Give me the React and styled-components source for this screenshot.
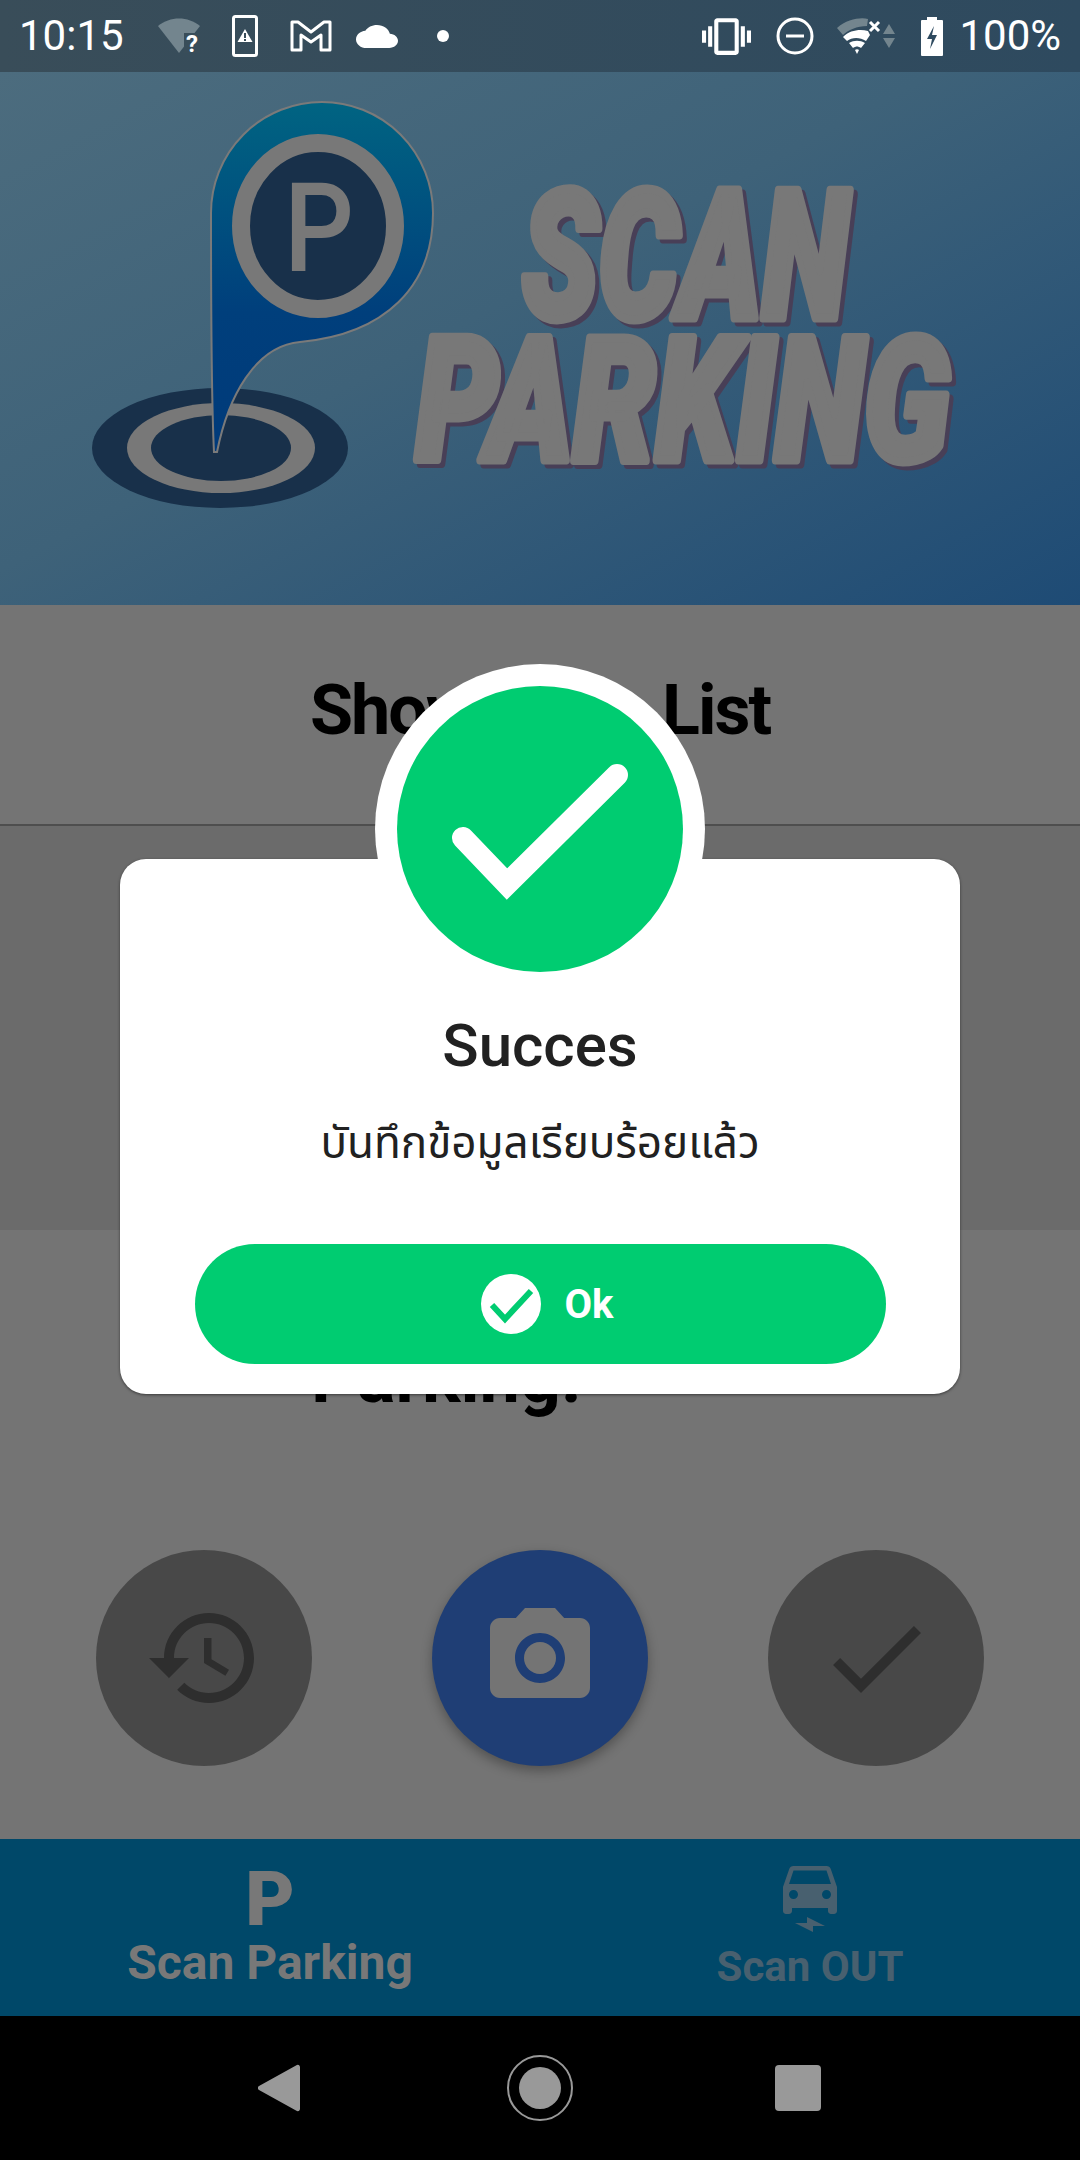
import React from 'react'
import styled, { createGlobalStyle } from 'styled-components'

const GlobalStyle = createGlobalStyle`
    html, body {
        margin: 0;
        padding: 0;
        background: #000;
        font-family: Roboto, "Noto Sans", sans-serif;
    }
`

const Page = styled.div`
    position: relative;
    width: 1080px;
    height: 2160px;
    overflow: hidden;
    display: flex;
    flex-direction: column;
`

// Status bar
const StatusBar = styled.div`
    height: 72px;
    flex: none;
    display: flex;
    align-items: center;
    justify-content: space-between;
    padding: 0 19px;
    background: linear-gradient(90deg, #394d59, #2e4a5f);
    color: #fff;
`

const StatusGroup = styled.div`
    display: flex;
    align-items: center;
`

const StatusText = styled.span`
    font-size: 42px;
    line-height: 72px;
    color: #fff;
    margin-left: ${(p) => p.$gap || 0}px;
`

const StatusIcon = styled.svg`
    display: block;
    flex: none;
    overflow: visible;
    margin-left: ${(p) => p.$gap || 0}px;
`

const Dot = styled.span`
    width: 12px;
    height: 12px;
    border-radius: 50%;
    background: #fff;
    margin-left: 39px;
`

// Logo header
const Header = styled.header`
    height: 533px;
    flex: none;
    background: linear-gradient(152deg, #4c6c7e 0%, #3e6279 45%, #1e4b75 100%);
`

const LogoSvg = styled.svg`
    display: block;
    width: 1080px;
    height: 533px;
    filter: blur(0.7px);
`

const LogoWord = styled.text`
    font-family: Roboto, "Liberation Sans", sans-serif;
    font-weight: 900;
    font-style: italic;
    fill: #787878;
    stroke: #787878;
    stroke-width: 9px;
    stroke-linejoin: round;
    filter: drop-shadow(4px 4px 0 #483f57);
`

const LogoLetter = styled.text`
    font-family: Roboto, sans-serif;
    font-weight: 500;
    font-size: 125px;
    fill: #787878;
`

// Page sections
const TitleSection = styled.section`
    height: 221px;
    flex: none;
    box-sizing: border-box;
    padding-top: 63px;
    background: #747474;
    border-bottom: 2px solid #4e4e4e;
`

const PageTitle = styled.h1`
    margin: 0;
    font-size: 70px;
    line-height: 84px;
    font-weight: 700;
    letter-spacing: -2px;
    word-spacing: 10px;
    color: #000;
    text-align: center;
`

const ListArea = styled.section`
    height: 404px;
    flex: none;
    background: #6b6b6b;
`

const ScanSection = styled.section`
    flex: 1;
    box-sizing: border-box;
    padding: 106px 0 0;
    background: #747474;
`

const ScanLabel = styled.h2`
    margin: 0;
    padding-left: 311px;
    font-size: 72px;
    line-height: 84px;
    font-weight: 700;
    color: #000;
`

const ActionRow = styled.div`
    display: flex;
    justify-content: space-between;
    padding: 0 96px;
    margin-top: 130px;
`

const ActionButton = styled.div`
    width: 216px;
    height: 216px;
    border-radius: 50%;
    display: flex;
    align-items: center;
    justify-content: center;
    background: ${(p) => (p.$primary ? '#1f3e75' : '#484848')};
    box-shadow: ${(p) => (p.$primary ? '0 5px 12px rgba(0, 0, 0, .3)' : 'none')};
    color: ${(p) => (p.$primary ? '#747474' : '#2e2e2e')};
`

// Bottom tabs
const BottomTabs = styled.nav`
    height: 177px;
    flex: none;
    display: grid;
    grid-template-columns: 1fr 1fr;
    background: #004869;
`

const Tab = styled.div`
    display: flex;
    flex-direction: column;
    align-items: center;
    color: ${(p) => (p.$active ? '#787878' : '#48606f')};
`

const TabLetter = styled.span`
    font-size: 76px;
    font-weight: 900;
    line-height: 60px;
    margin-top: 30px;
    height: 60px;
`

const TabLabel = styled.span`
    font-weight: 700;
    font-size: ${(p) => (p.$active ? 48 : 42)}px;
    line-height: 54px;
    margin-top: ${(p) => p.$top}px;
`

const CarIcon = styled.svg`
    display: block;
    margin-top: 24px;
`

// System navigation
const SystemNav = styled.div`
    height: 144px;
    flex: none;
    box-sizing: border-box;
    padding: 0 259px 0 258px;
    display: flex;
    align-items: center;
    justify-content: space-between;
    background: #000;
`

const SysIcon = styled.svg`
    display: block;
`

const HomeRing = styled.div`
    width: 66px;
    height: 66px;
    margin-left: 5px;
    box-sizing: border-box;
    border: 2.5px solid #999;
    border-radius: 50%;
    display: flex;
    align-items: center;
    justify-content: center;
    &::after {
        content: '';
        width: 42px;
        height: 42px;
        border-radius: 50%;
        background: #999;
    }
`

const RecentSquare = styled.div`
    width: 46px;
    height: 46px;
    border-radius: 4px;
    background: #999;
`

// Success dialog
const Dialog = styled.div`
    position: absolute;
    top: 859px;
    left: 120px;
    width: 840px;
    height: 535px;
    box-sizing: border-box;
    padding: 153px 74px 0;
    display: flex;
    flex-direction: column;
    align-items: center;
    background: #fff;
    border-radius: 26px;
    box-shadow: 0 1px 3px rgba(0, 0, 0, .5);
`

const BadgeRing = styled.div`
    position: absolute;
    top: -195px;
    left: 255px;
    width: 330px;
    height: 330px;
    border-radius: 50%;
    background: #fff;
    display: flex;
    align-items: center;
    justify-content: center;
`

const Badge = styled.svg`
    display: block;
`

const DialogTitle = styled.h2`
    margin: 0;
    font-size: 60px;
    line-height: 68px;
    font-weight: 500;
    color: #212121;
`

const DialogText = styled.p`
    margin: 33px 0 0;
    font-size: 44px;
    line-height: 60px;
    font-family: Roboto, "Noto Sans Thai", "Noto Sans", "DejaVu Sans", sans-serif;
    color: #212121;
    white-space: nowrap;
`

const OkButton = styled.div`
    width: 691px;
    height: 120px;
    margin-top: 71px;
    flex: none;
    box-sizing: border-box;
    padding-left: 14px;
    border-radius: 60px;
    background: #00cc71;
    display: flex;
    align-items: center;
    justify-content: center;
    gap: 24px;
`

const OkLabel = styled.span`
    font-size: 40px;
    font-weight: 700;
    color: #fff;
`

const Logo = () => (
    <LogoSvg viewBox="0 0 1080 533">
        <defs>
            <linearGradient id="pin" x1="0" y1="0" x2="0" y2="1">
                <stop offset="0" stopColor="#006482" />
                <stop offset="0.6" stopColor="#003f7c" />
                <stop offset="1" stopColor="#003a7a" />
            </linearGradient>
        </defs>
        <ellipse cx="220" cy="376" rx="128" ry="60" fill="#18304a" />
        <ellipse cx="221" cy="376" rx="94" ry="45" fill="#787878" />
        <ellipse cx="221" cy="376" rx="70" ry="33" fill="#18304a" />
        <path
            d="M214 380 C211 320 211 230 211 141 A111 111 0 0 1 433 141 C433 215 385 262 300 270 C255 274 228 325 217 380 Z"
            fill="url(#pin)"
            stroke="#7a7a7a"
            strokeWidth="2"
        />
        <ellipse cx="318" cy="154" rx="77" ry="83" fill="#18304a" stroke="#787878" strokeWidth="18" />
        <LogoLetter x="284" y="199" textLength="70" lengthAdjust="spacingAndGlyphs">P</LogoLetter>
        <LogoWord x="522" y="246" fontSize="180" textLength="326" lengthAdjust="spacingAndGlyphs">SCAN</LogoWord>
        <LogoWord x="416" y="388" fontSize="172" textLength="534" lengthAdjust="spacingAndGlyphs">PARKING</LogoWord>
    </LogoSvg>
)

const App = () => {
    return (
        <Page>
            <GlobalStyle />
            <StatusBar>
                <StatusGroup>
                    <StatusText>10:15</StatusText>
                    <StatusIcon $gap={34} width="42" height="34" viewBox="0 0 42 34">
                        <path d="M0 7C12-3 30-3 42 7L21 34Z" fill="#73858e" />
                        <path d="M26 14h16v20H26Z" fill="#394d59" />
                        <text x="34" y="33" fontSize="24" fontWeight="700" fontFamily="Roboto, sans-serif" fill="#fff" textAnchor="middle">?</text>
                    </StatusIcon>
                    <StatusIcon $gap={32} width="26" height="42" viewBox="0 0 26 42">
                        <rect x="1.5" y="1.5" width="23" height="39" rx="2" fill="none" stroke="#fff" strokeWidth="3" />
                        <path d="M13 14l7.500 13h-15Z" fill="#fff" />
                        <path d="M12 18h2v5h-2zM12 24h2v2h-2z" fill="#394d59" />
                    </StatusIcon>
                    <StatusIcon $gap={32} width="42" height="32" viewBox="0 0 42 32">
                        <path d="M2 2h6l13 10L34 2h6v28h-9V15l-10 7-10-7v15H2Z" fill="none" stroke="#fff" strokeWidth="3" strokeLinejoin="round" />
                    </StatusIcon>
                    <StatusIcon $gap={24} width="42" height="23" viewBox="0 4 24 16" preserveAspectRatio="none">
                        <path d="M19.35 10.040C18.670 6.590 15.640 4 12 4 9.110 4 6.600 5.640 5.350 8.040 2.340 8.360 0 10.910 0 14c0 3.310 2.690 6 6 6h13c2.760 0 5-2.240 5-5 0-2.640-2.050-4.780-4.650-4.960z" fill="#fff" />
                    </StatusIcon>
                    <Dot />
                </StatusGroup>
                <StatusGroup>
                    <StatusIcon width="49" height="37" viewBox="0 3 24 18">
                        <path d="M0 15h2V9H0v6zm3 2h2V7H3v10zm19-8v6h2V9h-2zm-3 8h2V7h-2v10zM16.500 3h-9C6.670 3 6 3.670 6 4.500v15c0 .83.67 1.500 1.500 1.500h9c.83 0 1.500-.67 1.500-1.500v-15c0-.83-.67-1.500-1.500-1.500zM16 19H8V5h8v14z" fill="#fff" />
                    </StatusIcon>
                    <StatusIcon $gap={25} width="38" height="38" viewBox="0 0 38 38">
                        <circle cx="19" cy="19" r="17" fill="none" stroke="#fff" strokeWidth="3" />
                        <path d="M10 19h18" stroke="#fff" strokeWidth="3" />
                    </StatusIcon>
                    <StatusIcon $gap={23} width="58" height="38" viewBox="0 0 58 38">
                        <path d="M0 11C10 2 24 0 31 2L30 9C20 9 11 13 6 18Z" fill="#73858e" />
                        <path d="M6 20C13 13 23 12 31 14L33 18 29 24C23 20 15 20 10 24Z" fill="#fff" />
                        <path d="M12 26C17 23 23 23 28 26L24 31C21 29 19 29 16 31Z" fill="#fff" />
                        <path d="M18 33C19 32 21 32 22 33L20 37Z" fill="#fff" />
                        <path d="M33 5l9 9M42 5l-9 9" stroke="#fff" strokeWidth="3" />
                        <path d="M52 7l6 10H46ZM46 21h12l-6 10Z" fill="#73858e" />
                    </StatusIcon>
                    <StatusIcon $gap={26} width="22" height="39" viewBox="0 0 22 39">
                        <path d="M6 0h10v3h5a1 1 0 0 1 1 1v34a1 1 0 0 1-1 1H1a1 1 0 0 1-1-1V4a1 1 0 0 1 1-1h5Z" fill="#fff" />
                        <path d="M13 9L6 22h5l-2 10 7-14h-5Z" fill="#2e4a5f" />
                    </StatusIcon>
                    <StatusText $gap={16}>100%</StatusText>
                </StatusGroup>
            </StatusBar>

            <Header>
                <Logo />
            </Header>

            <TitleSection>
                <PageTitle>Show Data List</PageTitle>
            </TitleSection>
            <ListArea />

            <ScanSection>
                <ScanLabel>Parking:</ScanLabel>
                <ActionRow>
                    <ActionButton>
                        <svg width="120" height="120" viewBox="0 0 24 24" fill="currentColor">
                            <path d="M13 3c-4.970 0-9 4.030-9 9H1l3.890 3.890.07.14L9 12H6c0-3.870 3.130-7 7-7s7 3.130 7 7-3.130 7-7 7c-1.930 0-3.680-.79-4.940-2.060l-1.420 1.420C8.270 19.990 10.510 21 13 21c4.970 0 9-4.030 9-9s-4.030-9-9-9zm-1 5v5l4.280 2.540.72-1.210-3.500-2.080V8H12z" />
                        </svg>
                    </ActionButton>
                    <ActionButton $primary>
                        <svg width="120" height="120" viewBox="0 0 24 24" fill="currentColor">
                            <circle cx="12" cy="12" r="3.200" />
                            <path d="M9 2L7.170 4H4c-1.100 0-2 .9-2 2v12c0 1.100.9 2 2 2h16c1.100 0 2-.9 2-2V6c0-1.100-.9-2-2-2h-3.170L15 2H9zm3 15c-2.760 0-5-2.240-5-5s2.240-5 5-5 5 2.240 5 5-2.240 5-5 5z" />
                        </svg>
                    </ActionButton>
                    <ActionButton>
                        <svg width="120" height="120" viewBox="0 0 24 24" fill="currentColor">
                            <path d="M9 16.170L4.830 12l-1.420 1.410L9 19 21 7l-1.410-1.410z" />
                        </svg>
                    </ActionButton>
                </ActionRow>
            </ScanSection>

            <BottomTabs>
                <Tab $active>
                    <TabLetter>P</TabLetter>
                    <TabLabel $active $top={7}>Scan Parking</TabLabel>
                </Tab>
                <Tab>
                    <CarIcon width="72" height="72" viewBox="0 0 24 24" fill="currentColor">
                        <path d="M18.920 2.010C18.720 1.420 18.160 1 17.500 1h-11c-.66 0-1.210.42-1.420 1.010L3 8v8c0 .55.45 1 1 1h1c.55 0 1-.45 1-1v-1h12v1c0 .55.45 1 1 1h1c.55 0 1-.45 1-1V8l-2.080-5.990zM6.500 12C5.670 12 5 11.330 5 10.500S5.670 9 6.500 9 8 9.670 8 10.500 7.330 12 6.500 12zm11 0c-.83 0-1.500-.67-1.500-1.500S16.670 9 17.500 9s1.500.67 1.500 1.500-.67 1.500-1.500 1.500zM5 7l1.500-4.500h11L19 7H5zM7 20h4v-2l6 3h-4v2z" />
                    </CarIcon>
                    <TabLabel $top={5}>Scan OUT</TabLabel>
                </Tab>
            </BottomTabs>

            <SystemNav>
                <SysIcon width="42" height="48" viewBox="0 0 42 48">
                    <path d="M38 1.500c2-1.500 4-.5 4 2v41c0 2.500-2 3.500-4 2L1 26c-1.500-1-1.500-3 0-4Z" fill="#999" />
                </SysIcon>
                <HomeRing />
                <RecentSquare />
            </SystemNav>

            <Dialog>
                <BadgeRing>
                    <Badge width="286" height="286" viewBox="0 0 286 286">
                        <circle cx="143" cy="143" r="143" fill="#00cc71" />
                        <path d="M66 152L110 198 220 89" fill="none" stroke="#fff" strokeWidth="22" strokeLinecap="round" />
                    </Badge>
                </BadgeRing>
                <DialogTitle>Succes</DialogTitle>
                <DialogText>บันทึกข้อมูลเรียบร้อยแล้ว</DialogText>
                <OkButton>
                    <svg width="60" height="60" viewBox="0 0 60 60">
                        <circle cx="30" cy="30" r="30" fill="#fff" />
                        <path d="M11 31L24 45 50 17" fill="none" stroke="#00cc71" strokeWidth="6" />
                    </svg>
                    <OkLabel>Ok</OkLabel>
                </OkButton>
            </Dialog>
        </Page>
    )
}

export default App
